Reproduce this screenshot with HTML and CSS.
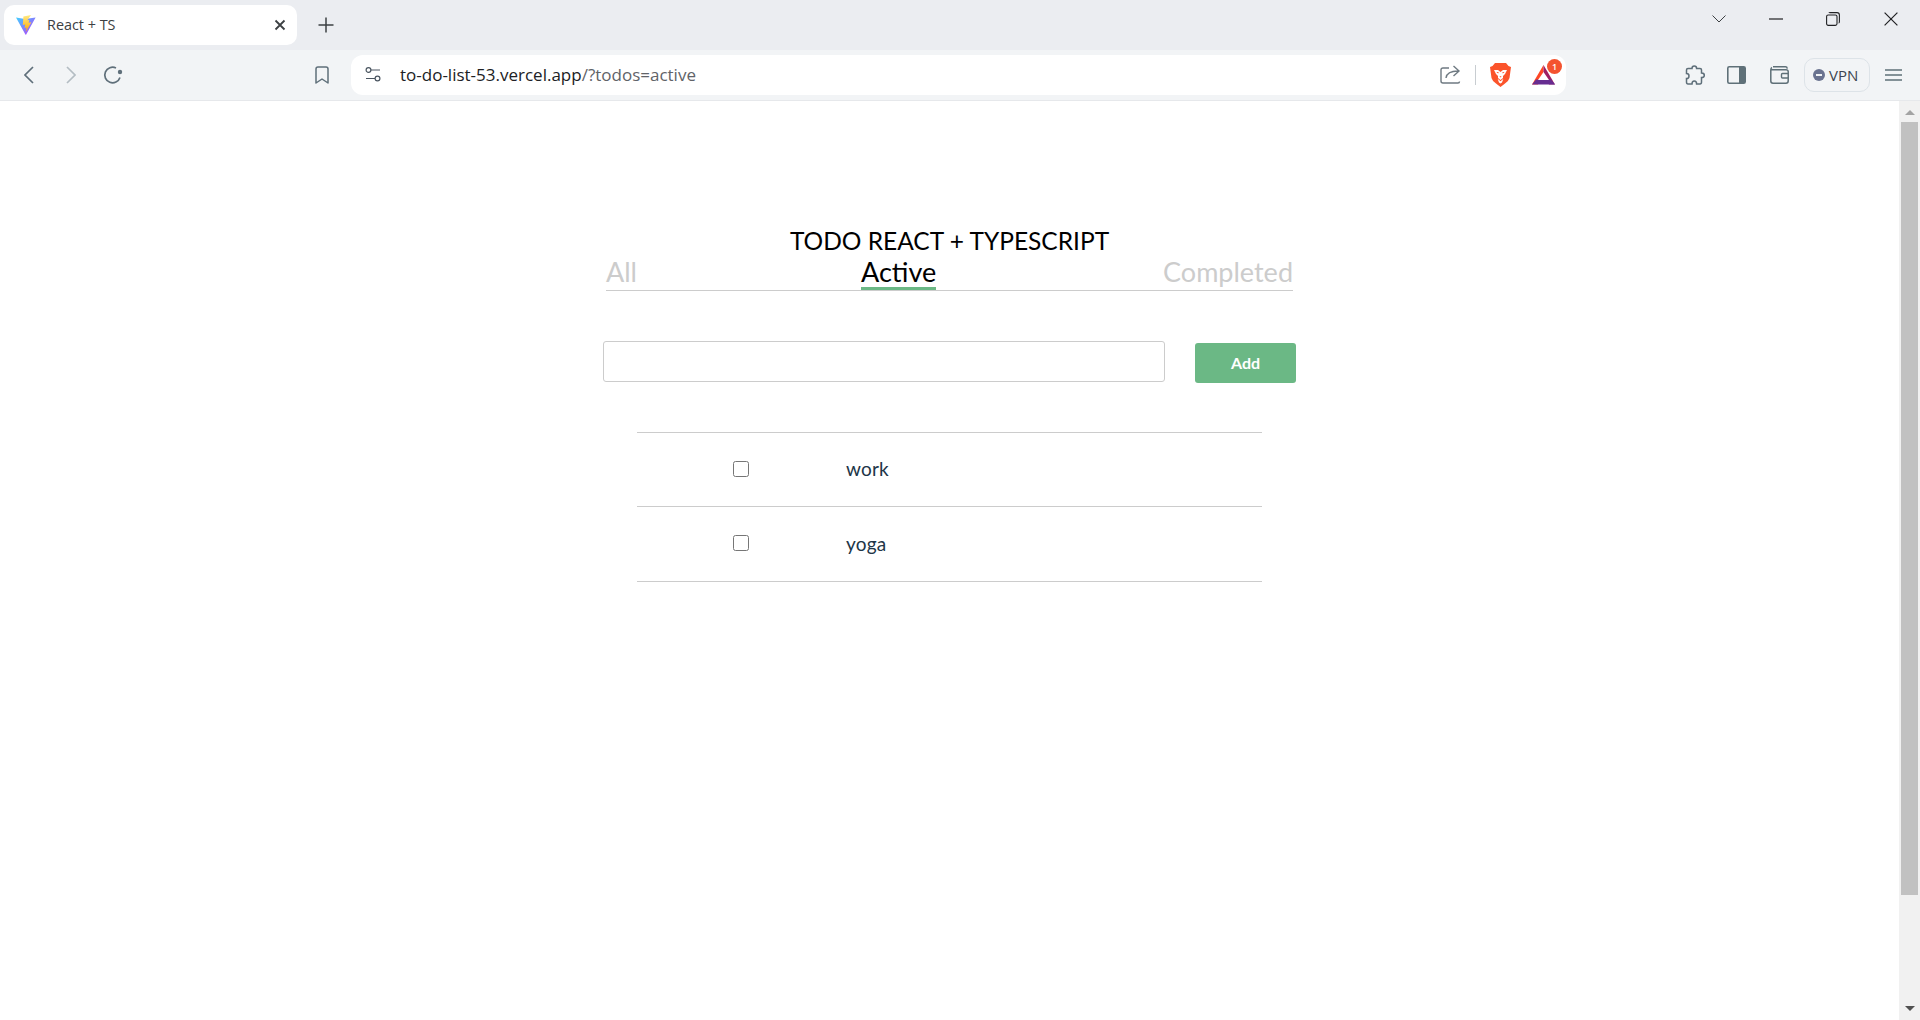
FILE: index.html
```html
<!DOCTYPE html>
<html lang="en">
<head>
<meta charset="utf-8">
<title>React + TS</title>
<link rel="stylesheet" href="styles.css">
</head>
<body>
<div class="browser">
  <div class="tabstrip">
    <div class="tab">
      <svg class="favicon" width="20" height="20" viewBox="0 0 20 20"><defs><linearGradient id="v" x1="0" y1="0" x2="1" y2="1"><stop offset="0" stop-color="#41d1ff"/><stop offset="1" stop-color="#bd34fe"/></linearGradient><linearGradient id="b" x1="0" y1="0" x2="0" y2="1"><stop offset="0" stop-color="#ffea83"/><stop offset="1" stop-color="#ffa800"/></linearGradient></defs><path d="M0 2.5 L9 4 L19.6 2.5 L10.2 19.6 Q9.8 20 9.4 19.6Z" fill="url(#v)"/><path d="M15 0 L7.4 1.4 L6.8 10 L9.2 9.4 L8.6 13 L10.6 12.4 L9.8 17 L15.4 7.2 L12.6 7.8 L13.4 5 L11.4 5.2Z" fill="url(#b)"/></svg>
      <span class="tab-title">React + TS</span>
      <svg class="tab-close" width="12" height="12" viewBox="0 0 12 12"><path d="M1.5 1.5 L10.5 10.5 M10.5 1.5 L1.5 10.5" stroke="#3c4043" stroke-width="1.8"/></svg>
    </div>
    <svg class="new-tab" width="16" height="16" viewBox="0 0 16 16"><path d="M8 .5 V15.5 M.5 8 H15.5" stroke="#3c4043" stroke-width="1.5"/></svg>
    <div class="window-controls">
      <svg width="14" height="8" viewBox="0 0 14 8"><path d="M.5 .5 L7 7 L13.5 .5" fill="none" stroke="#3c4043"/></svg>
      <svg class="wc-min" width="14" height="2" viewBox="0 0 14 2"><path d="M0 1 H14" stroke="#202124" stroke-width="1.2"/></svg>
      <svg class="wc-max" width="14" height="14" viewBox="0 0 14 14"><rect x=".6" y="3" width="10.4" height="10.4" rx="1.6" fill="none" stroke="#202124" stroke-width="1.1"/><path d="M3 1 Q3 .6 4.5 .6 H11 Q13.4 .6 13.4 3 V9.5 Q13.4 11 12.6 11" fill="none" stroke="#202124" stroke-width="1.1"/></svg>
      <svg class="wc-close" width="14" height="14" viewBox="0 0 14 14"><path d="M.6 .6 L13.4 13.4 M13.4 .6 L.6 13.4" stroke="#202124" stroke-width="1.2"/></svg>
    </div>
  </div>
  <div class="toolbar">
    <svg class="ic-back" width="10" height="18" viewBox="0 0 10 18"><path d="M9 1 L1 9 L9 17" fill="none" stroke="#5f6f7a" stroke-width="1.7"/></svg>
    <svg class="ic-forward" width="10" height="18" viewBox="0 0 10 18"><path d="M1 1 L9 9 L1 17" fill="none" stroke="#b4bdc3" stroke-width="1.7"/></svg>
    <svg class="ic-reload" width="20" height="20" viewBox="0 0 20 20"><path d="M17 12.5 A7.8 7.8 0 1 1 13 3" fill="none" stroke="#5f6f7a" stroke-width="1.7"/><circle cx="17" cy="7" r="2.2" fill="#5f6f7a"/></svg>
    <svg class="ic-bookmark" width="14" height="18" viewBox="0 0 14 18"><path d="M1 3 Q1 1 3 1 H11 Q13 1 13 3 V17 L7 13 L1 17Z" fill="none" stroke="#5f6f7a" stroke-width="1.5" stroke-linejoin="round"/></svg>
    <div class="omnibox">
      <svg class="ic-tune" width="16" height="15" viewBox="0 0 16 15"><circle cx="3.5" cy="3" r="2.4" fill="none" stroke="#4a5560" stroke-width="1.2"/><path d="M6 3 H15 M1 11.5 H10" stroke="#4a5560" stroke-width="1.2"/><circle cx="12.5" cy="11.5" r="2.4" fill="none" stroke="#4a5560" stroke-width="1.2"/></svg>
      <span class="url"><span class="url-host">to-do-list-53.vercel.app</span>/?todos=active</span>
      <svg class="ic-share" width="21" height="19" viewBox="0 0 21 19"><path d="M9 3 H3 Q1 3 1 5 V16 Q1 18 3 18 H18 Q19.5 18 19.5 16.5" fill="none" stroke="#6f7a82" stroke-width="1.4"/><path d="M6 13 Q7 6 18 6 M13.5 1 L19 6 L13.5 11" fill="none" stroke="#6f7a82" stroke-width="1.4"/></svg>
      <span class="omni-sep"></span>
      <svg class="ic-brave" width="21" height="24" viewBox="0 0 21 24"><path d="M5 0 H16 L18.5 3 L21 4 L19.5 15 Q18.5 18.5 15 20.5 L10.5 24 L6 20.5 Q2.5 18.5 1.5 15 L0 4 L2.5 3Z" fill="#fb542b"/><path d="M4 7 L8 7 L10.5 9 L13 7 L17 7 L15 11 L13 13 L13 15 L10.5 17 L8 15 L8 13 L6 11Z" fill="#fff"/><path d="M7.6 15.8 L10.5 18.2 L13.4 15.8 L12 19.5 L10.5 20.5 L9 19.5Z" fill="#fff"/><path d="M6.4 9 H8.6 L8.2 10.4Z M14.6 9 H12.4 L12.8 10.4Z M9.4 13.2 H11.6 L10.5 14.6Z" fill="#fb542b"/></svg>
      <span class="bat">
        <svg width="23" height="20" viewBox="0 0 23 20"><path d="M11.5 0 L0 19.5 H6 L11.5 9.5Z" fill="#ff4724"/><path d="M11.5 0 L23 19.5 H17 L11.5 9.5Z" fill="#9e1f63"/><path d="M0 19.5 L4 14.5 H19 L23 19.5Z" fill="#662d91"/><path d="M11.5 7 L17 15 H6Z" fill="#fff"/></svg>
        <span class="bat-badge">1</span>
      </span>
    </div>
    <svg class="ic-puzzle" width="20" height="20" viewBox="0 0 20 20"><path d="M7 3.5 Q7 1 9.3 1 Q11.6 1 11.6 3.5 H15 Q16.5 3.5 16.5 5 V8 Q19.3 8 19.3 10.3 Q19.3 12.6 16.5 12.6 V17 Q16.5 19 15 19 H11.6 Q11.6 16 9.3 16 Q7 16 7 19 H3 Q1.5 19 1.5 17 V13.6 Q4 13.6 4 11 Q4 8.6 1.5 8.6 V5 Q1.5 3.5 3 3.5Z" fill="none" stroke="#5f6f7a" stroke-width="1.5"/></svg>
    <svg class="ic-side" width="19" height="18" viewBox="0 0 19 18"><rect x=".8" y=".8" width="17.4" height="16.4" rx="1.5" fill="none" stroke="#5f7078" stroke-width="1.6"/><rect x="12" y="1" width="6" height="16" fill="#5f7078"/></svg>
    <svg class="ic-wallet" width="19" height="18" viewBox="0 0 19 18"><path d="M3 .8 H15.5 Q17 .8 17.3 2.6 M2 1.5 Q.8 2 .8 4 V15 Q.8 17.2 3 17.2 H16 Q18.2 17.2 18.2 15 V5.5 Q18.2 3.8 16 3.8 H1.5" fill="none" stroke="#5f7078" stroke-width="1.5"/><rect x="11.5" y="7.5" width="6.7" height="4.5" rx="1" fill="#f2f4f6" stroke="#5f7078" stroke-width="1.4"/></svg>
    <div class="vpn"><span class="vpn-dot"></span><span>VPN</span></div>
    <svg class="ic-menu" width="17" height="12" viewBox="0 0 17 12"><path d="M0 1 H17 M0 6 H17 M0 11 H17" stroke="#5f7078" stroke-width="1.3"/></svg>
  </div>
  <div class="viewport">
    <main class="page">
      <h1 class="title">TODO REACT + TYPESCRIPT</h1>
      <nav class="filters">
        <a class="filter">All</a>
        <a class="filter is-active">Active</a>
        <a class="filter filter-end">Completed</a>
      </nav>
      <form class="add-form">
        <input class="add-input" type="text" aria-label="New todo">
        <button class="add-btn" type="button"><span class="add-label">Add</span></button>
      </form>
      <ul class="todos">
        <li class="todo"><input class="todo-check" type="checkbox" aria-label="work"><span class="todo-text">work</span></li>
        <li class="todo"><input class="todo-check" type="checkbox" aria-label="yoga"><span class="todo-text">yoga</span></li>
      </ul>
    </main>
    <div class="scrollbar">
      <span class="arrow arrow-up"></span>
      <span class="thumb"></span>
      <span class="arrow arrow-down"></span>
    </div>
  </div>
</div>
</body>
</html>
```
FILE: styles.css
```css
* { box-sizing: border-box; }
html, body { margin: 0; height: 100%; overflow: hidden; background: #fff; }
body { font-family: "Lato", "Liberation Sans", sans-serif; }
.browser { display: flex; flex-direction: column; height: 1020px; }
svg { display: block; flex: none; }

.tabstrip { display: flex; align-items: center; height: 50px; background: #ebedf1; padding-left: 4px; }
.tab { display: flex; align-items: center; width: 293px; height: 40px; background: #fff; border-radius: 10px; padding-left: 12px; }
.tab-title { margin-left: 11px; margin-top: -2px; flex: 1; font: 14.4px "Open Sans", sans-serif; color: #3c4043; }
.tab-close { margin-right: 11px; }
.new-tab { margin-left: 21px; }
.window-controls { display: flex; align-items: center; margin-left: auto; margin-bottom: 13px; padding-right: 22px; }
.wc-min { margin-left: 43px; }
.wc-max { margin-left: 43px; }
.wc-close { margin-left: 44px; }

.toolbar { display: flex; align-items: center; height: 51px; padding-bottom: 1px; background: #f2f4f6; border-bottom: 1px solid #e6e8eb; }
.ic-back { margin-left: 24px; }
.ic-forward { margin-left: 32px; }
.ic-reload { margin-left: 27px; }
.ic-bookmark { margin-left: 192px; }
.omnibox { display: flex; align-items: center; width: 1215px; height: 40px; margin-left: 22px; background: #fff; border-radius: 12px; padding-left: 14px; }
.url { margin-left: 19px; flex: 1; font: 17px "Open Sans", sans-serif; color: #5f6368; }
.url-host { color: #202124; }
.ic-share { margin-right: 14px; }
.omni-sep { width: 1px; height: 20px; background: #c8cdd1; margin-right: 14px; }
.ic-brave { margin-right: 20px; }
.bat { position: relative; display: block; margin-right: 11px; margin-left: 1px; width: 23px; height: 20px; }
.bat-badge { position: absolute; top: -6px; right: -7px; width: 15px; height: 15px; border-radius: 50%; background: #f4532f; color: #fff; font: 600 9px/15px "Open Sans", sans-serif; text-align: center; }
.ic-puzzle { margin-left: 119px; }
.ic-side { margin-left: 22px; }
.ic-wallet { margin-left: 24px; }
.vpn { display: flex; align-items: center; width: 66px; height: 34px; margin-left: 15px; border: 1.5px solid #dde3e8; border-radius: 10px; padding-left: 8px; font: 15px "Open Sans", sans-serif; color: #3c4450; }
.vpn-dot { position: relative; width: 12px; height: 12px; border-radius: 50%; background: #6a7390; margin-right: 4px; }
.vpn-dot::after { content: ""; position: absolute; left: 3px; top: 5px; width: 6px; height: 2px; background: #f2f4f6; }
.ic-menu { margin-left: 15px; }

.viewport { flex: 1; display: flex; min-height: 0; }
.page { flex: 1; padding-top: 124px; min-width: 0; }
.title { margin: 0; font-size: 24.5px; line-height: 32px; font-weight: 400; color: #000; text-align: center; }
.filters { display: grid; grid-template-columns: 255px auto 1fr; width: 687px; margin: 0 auto; height: 34px; border-bottom: 1px solid #ccc; }
.filter { font-size: 27px; line-height: 30px; height: 33px; color: #ccc; }
.filter-end { justify-self: end; }
.is-active { color: #000; border-bottom: 3px solid #6bb885; }
.add-form { display: flex; justify-content: space-between; width: 693px; margin: 50px auto 0; }
.add-input { width: 562px; height: 41px; border: 1px solid #ccc; border-radius: 3px; background: #fff; }
.add-btn { width: 101px; height: 40px; margin-top: 2px; padding: 0 0 2px; border: 0; border-radius: 3px; background: #6bb885; color: #fff; font: 700 16px "Lato", sans-serif; }
.add-label { display: block; }
.todos { list-style: none; width: 625px; margin: 49px auto 0; padding: 0; border-bottom: 1px solid #ccc; }
.todo { display: flex; align-items: center; height: 74.4px; border-top: 1px solid #ccc; padding: 0 0 2px 96px; }
.todo-check { width: 16px; height: 16px; margin: 0 97px 0 0; }
.todo-text { font-size: 19px; letter-spacing: .2px; color: #213547; }

.scrollbar { width: 21px; display: flex; flex-direction: column; align-items: center; background: #f1f1f1; padding-top: 9px; }
.arrow { width: 0; height: 0; border-left: 5px solid transparent; border-right: 5px solid transparent; }
.arrow-up { border-bottom: 5px solid #a3a3a3; }
.arrow-down { border-top: 5px solid #505050; margin-top: 111px; }
.thumb { width: 17px; height: 773px; margin-top: 7px; background: #c1c1c1; }
```
